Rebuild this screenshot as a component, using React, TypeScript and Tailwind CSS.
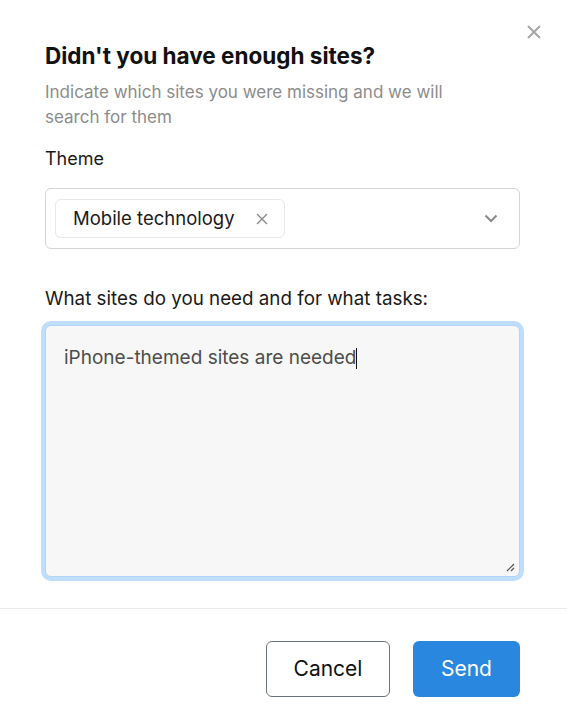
import React from "react";

export default function App() {
  return (
    <div
      className="relative w-[567px] h-[727px] bg-white overflow-hidden"
      style={{ fontFamily: "Inter, 'Noto Sans', sans-serif" }}
    >
      <button className="absolute right-[25px] top-[24px] w-[16px] h-[16px] flex items-center justify-center">
        <svg width="16" height="16" viewBox="0 0 16 16" fill="none">
          <path d="M2 2L14 14M14 2L2 14" stroke="#a6a6a6" strokeWidth="2" />
        </svg>
      </button>
      <div className="pl-[45px] pr-[47px] pt-[42px]">
        <h2 className="text-[22.5px] leading-[28px] font-bold text-[#111]">
          Didn't you have enough sites?
        </h2>
        <p className="mt-[10px] max-w-[420px] text-[17px] leading-[25px] text-[#8c8c8c]">
          Indicate which sites you were missing and we will search for them
        </p>
        <div className="mt-[16px] text-[18px] leading-[25px] text-[#1a1a1a]">Theme</div>
        <div className="mt-[17px] h-[61px] rounded-[6px] border border-[#d4d4d4] flex items-center pl-[9px] pr-[21px]">
          <div className="h-[39px] rounded-[6px] border border-[#e8e8e8] flex items-center pl-[17px] pr-[16px]">
            <span className="text-[18.5px] text-[#1a1a1a]">Mobile technology</span>
            <svg className="ml-[21px]" width="12" height="12" viewBox="0 0 12 12" fill="none">
              <path d="M1 1L11 11M11 1L1 11" stroke="#8a8a8a" strokeWidth="1.4" />
            </svg>
          </div>
          <div className="flex-1" />
          <svg width="14" height="9" viewBox="0 0 14 9" fill="none">
            <path d="M1.5 1.5L7 7L12.5 1.5" stroke="#8a8a8a" strokeWidth="2" />
          </svg>
        </div>
        <div className="mt-[37px] text-[18.8px] leading-[25px] text-[#1a1a1a]">
          What sites do you need and for what tasks:
        </div>
        <div className="mt-[10px] -mx-[4px] rounded-[10px] bg-[#bfdefc] p-[4px]">
          <div className="relative h-[252px] rounded-[6px] border border-[#b3d4f5] bg-[#f7f7f7] px-[18px] pt-[19px]">
            <span className="text-[19px] leading-[25px] text-[#4d4d4d]">iPhone-themed sites are needed</span>
            <span className="inline-block w-[1px] h-[21px] bg-[#111] align-middle -mt-[3px]" />
            <svg className="absolute right-[4px] bottom-[4px]" width="10" height="10" viewBox="0 0 10 10" fill="none">
              <path d="M9 2L2 9M9 6L6 9" stroke="#555" strokeWidth="1.2" />
            </svg>
          </div>
        </div>
      </div>
      <div className="mt-[27px] h-px bg-[#ebebeb]" />
      <div className="px-[47px] pt-[32px] flex justify-end gap-[23px]">
        <button className="w-[124px] h-[56px] rounded-[6px] border border-[#6b7280] bg-white text-[21px] text-[#111]">
          Cancel
        </button>
        <button className="w-[107px] h-[56px] rounded-[6px] bg-[#2a87e0] text-[21px] text-white">
          Send
        </button>
      </div>
    </div>
  );
}
